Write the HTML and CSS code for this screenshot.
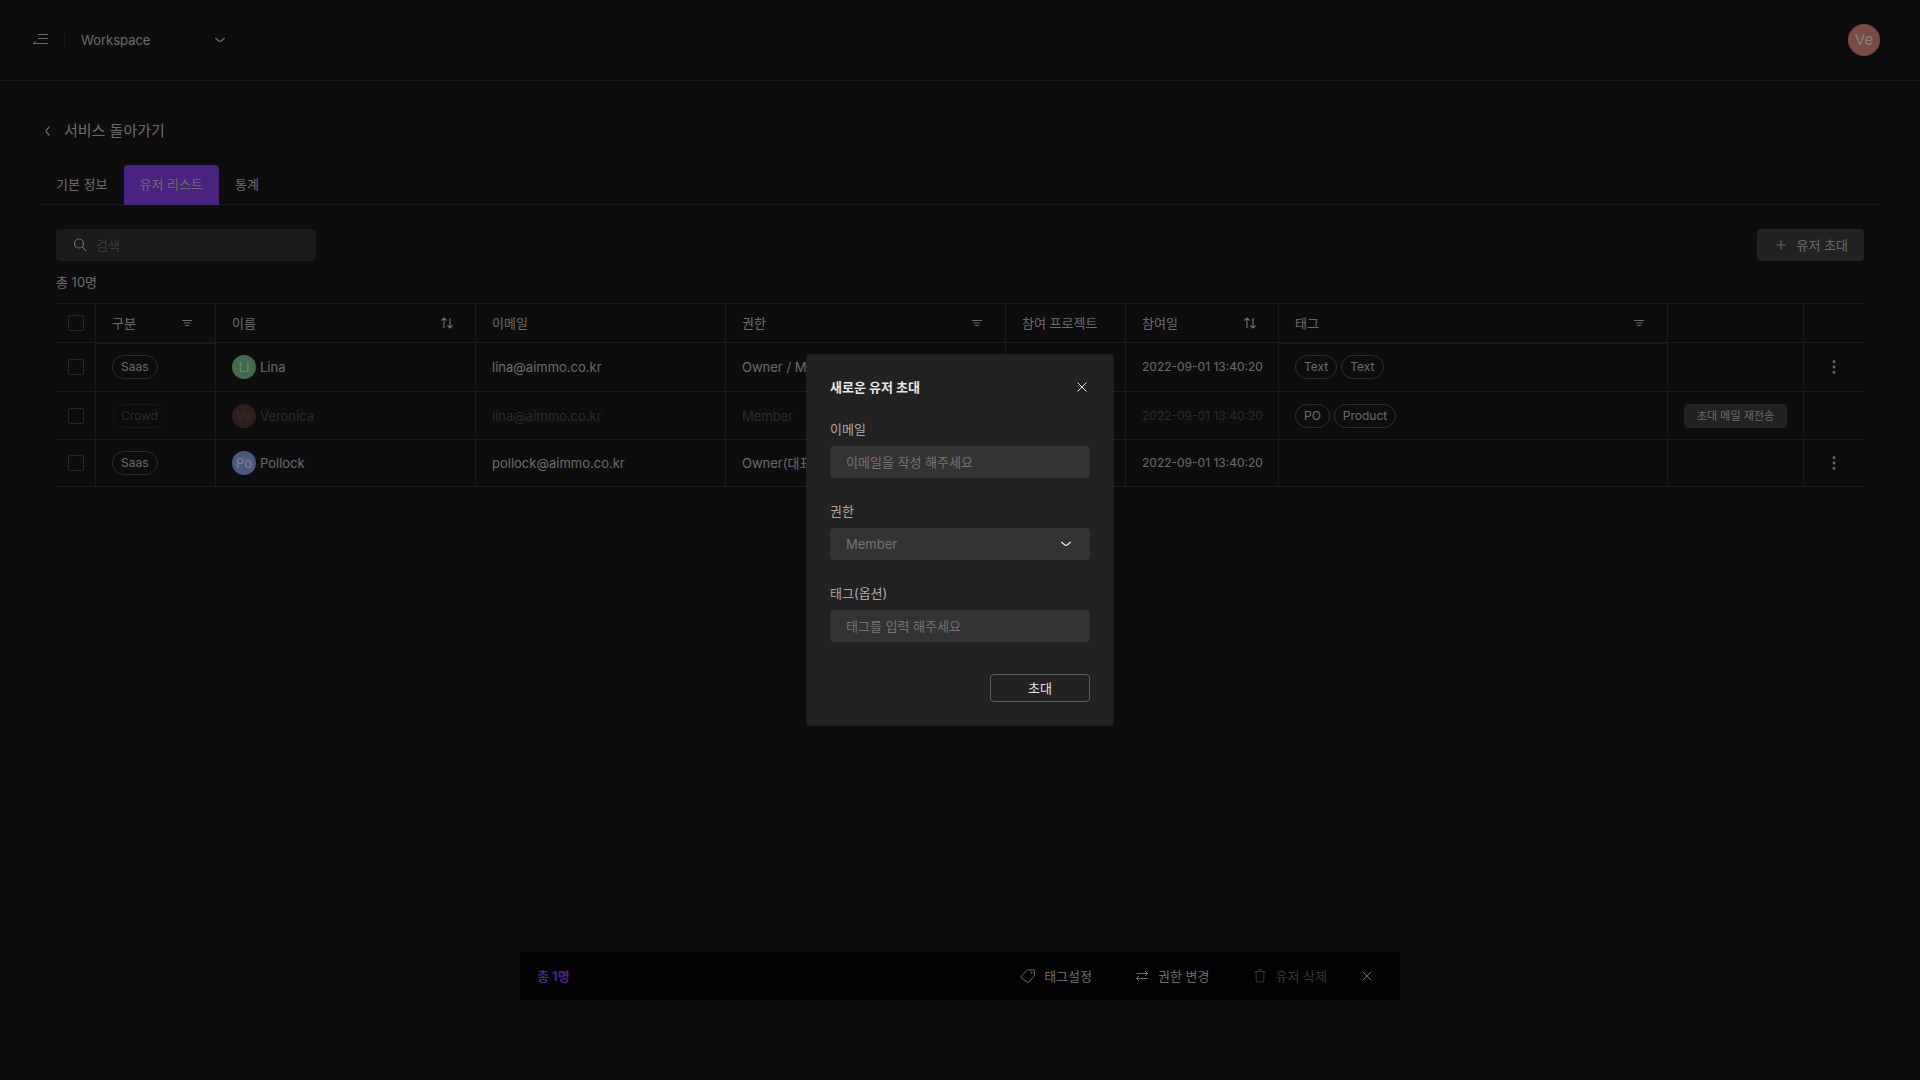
FILE: index.html
```html
<!DOCTYPE html>
<html lang="ko">
<head>
<meta charset="utf-8">
<meta name="viewport" content="width=device-width, initial-scale=1">
<title>유저 리스트</title>
<link rel="stylesheet" href="styles.css">
</head>
<body>
<svg class="sprite" aria-hidden="true">
  <symbol id="filter" viewBox="0 0 16 16"><path d="M3 5.5h10M6 10.5h4"/><path d="M5 8h6" stroke-width="2" opacity=".5"/></symbol>
  <symbol id="sort" viewBox="0 0 16 16"><path stroke-width="1.200" d="M5 13V3M2.300 5.700L5 3l2.700 2.700M11 3v10M8.300 10.300L11 13l2.700-2.700"/></symbol>
  <symbol id="chevron" viewBox="0 0 16 16"><path stroke-width="1.200" d="M3.300 6L6.500 8.700Q8 10 9.500 8.700L12.700 6"/></symbol>
  <symbol id="close" viewBox="0 0 16 16"><path d="M3.500 3.500l9 9M12.500 3.500l-9 9"/></symbol>
  <symbol id="kebab" viewBox="0 0 16 16"><g fill="currentColor" stroke="none"><circle cx="8" cy="2.700" r="1.400"/><circle cx="8" cy="8" r="1.400"/><circle cx="8" cy="13.300" r="1.400"/></g></symbol>
</svg>

<header class="topbar">
  <button class="icon-button" aria-label="메뉴"><svg class="icon" viewBox="0 0 16 16"><path d="M6 2.500h10M6 6.500h10M1 11.500h15M1 11.500L4 9"/></svg></button>
  <span class="divider"></span>
  <button class="workspace">Workspace<svg class="icon"><use href="#chevron"/></svg></button>
  <button class="avatar avatar-large red">Ve</button>
</header>

<main class="page">
  <a class="back" href="#"><svg class="icon" viewBox="0 0 16 16"><path stroke-width="1.200" d="M9.500 3.500L6.500 7Q5.700 8 6.500 9L9.500 12.500"/></svg>서비스 돌아가기</a>
  <nav class="tabs">
    <a class="tab" href="#">기본 정보</a>
    <a class="tab active" href="#" aria-current="page">유저 리스트</a>
    <a class="tab" href="#">통계</a>
  </nav>

  <section class="users">
    <div class="toolbar">
      <label class="search">
        <svg class="icon" viewBox="0 0 16 16"><g stroke-width="1.200"><circle cx="7" cy="6.500" r="4.500"/><path d="M10.200 9.800l3.800 4"/></g></svg>
        <input type="search" placeholder="검색" aria-label="검색">
      </label>
      <button class="invite"><svg class="icon" viewBox="0 0 16 16"><path d="M8 3.500v9M3.500 8h9"/></svg>유저 초대</button>
    </div>
    <p class="count">총 10명</p>

    <table class="table">
      <colgroup>
        <col class="w-check"><col class="w-small"><col class="w-name"><col class="w-email"><col class="w-role">
        <col class="w-small"><col class="w-date"><col><col class="w-resend"><col class="w-more">
      </colgroup>
      <thead>
        <tr>
          <th class="center"><input type="checkbox" aria-label="전체 선택"></th>
          <th class="filtered"><div class="head">구분<svg class="icon"><use href="#filter"/></svg></div></th>
          <th><div class="head">이름<svg class="icon"><use href="#sort"/></svg></div></th>
          <th>이메일</th>
          <th><div class="head">권한<svg class="icon"><use href="#filter"/></svg></div></th>
          <th>참여 프로젝트</th>
          <th><div class="head">참여일<svg class="icon"><use href="#sort"/></svg></div></th>
          <th class="filtered"><div class="head">태그<svg class="icon"><use href="#filter"/></svg></div></th>
          <th></th>
          <th></th>
        </tr>
      </thead>
      <tbody>
        <tr>
          <td class="center"><input type="checkbox" aria-label="Lina 선택"></td>
          <td><div class="pills"><span class="pill">Saas</span></div></td>
          <td><div class="user"><span class="avatar green">Li</span>Lina</div></td>
          <td>lina@aimmo.co.kr</td>
          <td>Owner / Member</td>
          <td></td>
          <td class="date">2022-09-01 13:40:20</td>
          <td><div class="pills"><span class="pill">Text</span><span class="pill">Text</span></div></td>
          <td></td>
          <td class="center"><button class="icon-button" aria-label="더보기"><svg class="icon"><use href="#kebab"/></svg></button></td>
        </tr>
        <tr>
          <td class="center"><input type="checkbox" aria-label="Veronica 선택"></td>
          <td><div class="pills pending"><span class="pill">Crowd</span></div></td>
          <td><div class="user pending"><span class="avatar red">Ve</span>Veronica</div></td>
          <td><span class="pending">lina@aimmo.co.kr</span></td>
          <td><span class="pending">Member</span></td>
          <td></td>
          <td class="date"><span class="pending">2022-09-01 13:40:20</span></td>
          <td><div class="pills"><span class="pill">PO</span><span class="pill">Product</span></div></td>
          <td><button class="resend">초대 메일 재전송</button></td>
          <td></td>
        </tr>
        <tr>
          <td class="center"><input type="checkbox" aria-label="Pollock 선택"></td>
          <td><div class="pills"><span class="pill">Saas</span></div></td>
          <td><div class="user"><span class="avatar blue">Po</span>Pollock</div></td>
          <td>pollock@aimmo.co.kr</td>
          <td>Owner(대표)</td>
          <td></td>
          <td class="date">2022-09-01 13:40:20</td>
          <td></td>
          <td></td>
          <td class="center"><button class="icon-button" aria-label="더보기"><svg class="icon"><use href="#kebab"/></svg></button></td>
        </tr>
      </tbody>
    </table>
  </section>
</main>

<div class="selection">
  <strong class="selected">총 1명</strong>
  <div class="actions">
    <button class="action-button"><svg class="icon" viewBox="0 0 16 16"><path d="M1.200 8.200L7 2.500Q7.500 2 8.200 2H13.500q1 0 1 1V7q0 .7-.5 1.200L8.700 14.300q-.7.700-1.400 0L1.200 9.600q-.7-.7 0-1.400z"/><circle cx="11.700" cy="4.800" r=".6"/></svg>태그설정</button>
    <button class="action-button"><svg class="icon" viewBox="0 0 16 16"><path d="M2.500 5.500h11M11 3l2.500 2.500L11 8M13.500 10.500h-11M5 8l-2.500 2.500L5 13"/></svg>권한 변경</button>
    <button class="action-button" disabled><svg class="icon" viewBox="0 0 16 16"><path d="M2.500 3.500h11M6 1.500h4M4 3.500l.3 9.500q0 1 1 1h5.400q1 0 1-1l.3-9.500"/></svg>유저 삭제</button>
  </div>
  <button class="icon-button" aria-label="선택 해제"><svg class="icon"><use href="#close"/></svg></button>
</div>

<div class="overlay">
  <form class="modal" role="dialog" aria-modal="true" aria-labelledby="modal-title">
    <div class="modal-head">
      <h2 class="modal-title" id="modal-title">새로운 유저 초대</h2>
      <button type="button" class="icon-button" aria-label="닫기"><svg class="icon"><use href="#close"/></svg></button>
    </div>
    <div class="field">
      <label for="email">이메일</label>
      <input class="control" id="email" type="email" placeholder="이메일을 작성 해주세요">
    </div>
    <div class="field">
      <label for="role">권한</label>
      <div class="select">
        <select class="control" id="role"><option>Member</option><option>Owner</option></select>
        <svg class="icon"><use href="#chevron"/></svg>
      </div>
    </div>
    <div class="field">
      <label for="tags">태그(옵션)</label>
      <input class="control" id="tags" type="text" placeholder="태그를 입력 해주세요">
    </div>
    <button type="submit" class="submit">초대</button>
  </form>
</div>
</body>
</html>
```
FILE: styles.css
```css
* {
  box-sizing: border-box;
}

body {
  margin: 0;
  min-height: 100vh;
  background: #1a1a1a;
  color: #d4d4d4;
  font: 13px/18px Inter, "Noto Sans CJK KR", sans-serif;
}

button,
input,
select {
  font: inherit;
  color: inherit;
}

button {
  border: 0;
  padding: 0;
  background: none;
  cursor: pointer;
}

a {
  color: inherit;
  text-decoration: none;
}

.sprite {
  display: none;
}

.icon {
  display: block;
  flex: none;
  width: 16px;
  height: 16px;
  fill: none;
  stroke: currentColor;
  stroke-width: 1;
}

.icon-button {
  display: block;
}

/* Top bar */
.topbar {
  display: flex;
  align-items: center;
  gap: 16px;
  height: 81px;
  padding: 0 40px 0 32px;
  border-bottom: 1px solid #363636;
}

.divider {
  width: 1px;
  height: 12px;
  background: #363636;
}

.workspace {
  display: flex;
  align-items: center;
  justify-content: space-between;
  width: 147px;
}

.avatar {
  display: flex;
  align-items: center;
  justify-content: center;
  width: 24px;
  height: 24px;
  border-radius: 50%;
  color: #fff;
}

.avatar-large {
  width: 32px;
  height: 32px;
  margin-left: auto;
  font-size: 15px;
}

.red {
  background: #f49488;
}

.green {
  background: #84d498;
}

.blue {
  background: #94b4fc;
}

/* Page */
.page {
  padding: 40px;
}

.back {
  display: flex;
  align-items: center;
  gap: 8px;
  height: 20px;
  font-size: 15px;
}

.tabs {
  display: flex;
  height: 40px;
  margin-top: 24px;
  border-bottom: 1px solid #363636;
}

.tab {
  height: 40px;
  padding: 0 16px;
  line-height: 38px;
}

.tab.active {
  border-radius: 4px 4px 0 0;
  background: #9147ff;
}

.users {
  padding: 24px 16px 0;
}

.toolbar {
  display: flex;
  justify-content: space-between;
}

.search {
  display: flex;
  align-items: center;
  gap: 8px;
  width: 260px;
  height: 32px;
  padding: 0 16px;
  border-radius: 4px;
  background: #363636;
}

.search input {
  flex: 1;
  min-width: 0;
  padding: 0;
  border: 0;
  outline: 0;
  background: none;
}

::placeholder {
  color: #747474;
  opacity: 1;
}

.invite {
  display: flex;
  align-items: center;
  gap: 8px;
  height: 32px;
  padding: 0 16px;
  border-radius: 4px;
  background: #444;
}

.count {
  margin: 12px 0;
}

/* Table */
.table {
  width: 100%;
  table-layout: fixed;
  border-collapse: separate;
  border-spacing: 0;
  border-top: 1px solid #363636;
}

.w-check {
  width: 40px;
}

.w-small {
  width: 120px;
}

.w-name {
  width: 260px;
}

.w-email {
  width: 250px;
}

.w-role {
  width: 280px;
}

.w-date {
  width: 153px;
}

.w-resend {
  width: 136px;
}

.w-more {
  width: 60px;
}

th,
td {
  height: 48px;
  padding: 0 16px;
  border-right: 1px solid #363636;
  border-bottom: 1px solid #363636;
  text-align: left;
  white-space: nowrap;
}

th:last-child,
td:last-child {
  border-right: 0;
}

th {
  height: 39px;
  font-weight: 400;
}

tbody tr:first-child td {
  height: 49px;
}

tbody tr:last-child td {
  height: 47px;
}

.center {
  padding: 0;
}

.center > * {
  margin: 0 auto;
}

.filtered {
  box-shadow: 0 1px #363636;
}

.head {
  display: flex;
  justify-content: space-between;
  align-items: center;
  padding-right: 4px;
}

input[type="checkbox"] {
  display: block;
  appearance: none;
  width: 16px;
  height: 16px;
  border: 1px solid #505050;
  border-radius: 2px;
}

.date {
  font-size: 12px;
}

.user {
  display: flex;
  align-items: center;
  gap: 4px;
}

.pills {
  display: flex;
  gap: 4px;
}

.pill {
  height: 24px;
  padding: 0 8px;
  border: 1px solid #5c5c5c;
  border-radius: 12px;
  font-size: 12px;
  line-height: 22px;
}

.pending {
  opacity: 0.3;
}

.resend {
  display: block;
  width: 100%;
  height: 24px;
  border-radius: 4px;
  background: #444;
  font-size: 11px;
}

/* Selection bar */
.selection {
  position: fixed;
  right: 0;
  bottom: 80px;
  left: 0;
  display: flex;
  align-items: center;
  gap: 32px;
  max-width: 880px;
  height: 48px;
  margin: 0 auto;
  padding: 0 25px 0 17px;
  border-radius: 4px;
  background: #040404;
}

.selected {
  margin-right: auto;
  color: #9147ff;
}

.actions {
  display: flex;
  gap: 42px;
}

.action-button {
  display: flex;
  align-items: center;
  gap: 8px;
}

.action-button:disabled {
  color: #6c6c6c;
}

/* Invite dialog */
.overlay {
  position: fixed;
  inset: 0;
  display: flex;
  align-items: center;
  justify-content: center;
  background: rgba(0, 0, 0, 0.5);
}

.modal {
  display: flex;
  flex-direction: column;
  gap: 24px;
  width: 308px;
  padding: 24px;
  border-radius: 4px;
  background: #222;
  color: #e6e6e6;
}

.modal-head {
  display: flex;
  align-items: center;
  justify-content: space-between;
}

.modal-title {
  margin: 0;
  font-size: 13px;
  font-weight: 700;
}

.field {
  display: grid;
  gap: 8px;
}

.field label {
  color: #a8a8a8;
}

.control {
  display: block;
  width: 100%;
  height: 32px;
  padding: 0 16px;
  border: 0;
  border-radius: 4px;
  outline: 0;
  appearance: none;
  background: #333;
  color: #747474;
}

.select {
  display: grid;
  align-items: center;
}

.select > * {
  grid-area: 1 / 1;
}

.select .icon {
  justify-self: end;
  margin-right: 16px;
  pointer-events: none;
}

.submit {
  align-self: flex-end;
  width: 100px;
  height: 28px;
  margin-top: 8px;
  border: 1px solid #5c5c5c;
  border-radius: 4px;
}
```
